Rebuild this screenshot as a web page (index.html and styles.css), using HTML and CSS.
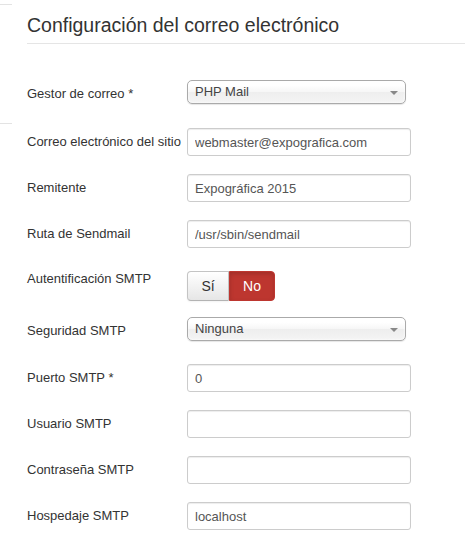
FILE: index.html
```html
<!DOCTYPE html>
<html lang="es">
<head>
<meta charset="UTF-8" />
<meta name="viewport" content="width=device-width, initial-scale=1" />
<title>Configuración del correo electrónico</title>
<link rel="stylesheet" href="styles.css">
</head>
<body>

<div class="layout">
  <div class="sidebar">
    <div class="rule rule-top"></div>
    <div class="rule rule-mid"></div>
  </div>

  <fieldset class="mail-config">
    <legend>Configuración del correo electrónico</legend>

    <div class="row row-select">
      <label>Gestor de correo *</label>
      <div class="chosen">
        <span>PHP Mail</span>
        <b class="arrow"></b>
      </div>
    </div>

    <div class="row">
      <label for="mailfrom">Correo electrónico del sitio</label>
      <input type="text" id="mailfrom" value="webmaster@expografica.com" />
    </div>

    <div class="row">
      <label for="fromname">Remitente</label>
      <input type="text" id="fromname" value="Expográfica 2015" />
    </div>

    <div class="row">
      <label for="sendmail">Ruta de Sendmail</label>
      <input type="text" id="sendmail" value="/usr/sbin/sendmail" />
    </div>

    <div class="row row-radio">
      <label>Autentificación SMTP</label>
      <div class="btn-group">
        <button class="btn">Sí</button>
        <button class="btn btn-danger">No</button>
      </div>
    </div>

    <div class="row row-select row-select-short">
      <label>Seguridad SMTP</label>
      <div class="chosen">
        <span>Ninguna</span>
        <b class="arrow"></b>
      </div>
    </div>

    <div class="row">
      <label for="smtpport">Puerto SMTP *</label>
      <input type="text" id="smtpport" value="0" />
    </div>

    <div class="row">
      <label for="smtpuser">Usuario SMTP</label>
      <input type="text" id="smtpuser" value="" />
    </div>

    <div class="row">
      <label for="smtppass">Contraseña SMTP</label>
      <input type="password" id="smtppass" value="" />
    </div>

    <div class="row">
      <label for="smtphost">Hospedaje SMTP</label>
      <input type="text" id="smtphost" value="localhost" />
    </div>
  </fieldset>
</div>

</body>
</html>
```

FILE: styles.css
```css
body { margin: 0; font-family: "Liberation Sans", Arial, sans-serif; font-size: 13px; line-height: 18px; color: #333; background: #fff; }
.layout { display: flex; }
.sidebar { width: 12px; flex-shrink: 0; }
.rule { height: 1px; background: #e3e3e3; }
.rule-top { margin-top: 4px; }
.rule-mid { margin-top: 118px; }

.mail-config { flex: 1; margin: 0; padding: 0 0 0 15px; border: 0; min-width: 0; }
.mail-config legend {
  display: block;
  width: 100%;
  padding: 8px 0 0;
  margin: 0 0 36px;
  font-size: 19.5px;
  line-height: 35px;
  color: #333;
  border-bottom: 1px solid #e5e5e5;
  box-sizing: border-box;
}

.row { display: flex; align-items: flex-start; margin-bottom: 18px; }
.row label { width: 160px; padding-top: 5px; line-height: 18px; color: #333; }
.row-select { min-height: 30px; }
.row-select-short { min-height: 29px; }
.row-radio { padding-top: 5px; margin-bottom: 16px; }
.row-radio label { margin-top: -5px; padding-top: 4px; }

input[type="text"], input[type="password"] {
  width: 224px;
  height: 28px;
  box-sizing: border-box;
  padding: 4px 7px;
  font: 13px/18px "Liberation Sans", Arial, sans-serif;
  color: #555;
  border: 1px solid #ccc;
  border-radius: 3px;
  box-shadow: inset 0 1px 1px rgba(0,0,0,0.075);
  background: #fff;
}

.chosen {
  position: relative;
  width: 219px;
  height: 24px;
  box-sizing: border-box;
  padding-left: 7px;
  line-height: 22px;
  color: #444;
  border: 1px solid #aaa;
  border-radius: 5px;
  background: linear-gradient(#fff 20%, #f6f6f6 50%, #eee 52%, #f4f4f4 100%);
  box-shadow: inset 0 0 3px #fff, 0 1px 1px rgba(0,0,0,0.1);
}
.chosen .arrow {
  position: absolute;
  right: 7px;
  top: 10px;
  width: 0;
  height: 0;
  border-left: 4px solid transparent;
  border-right: 4px solid transparent;
  border-top: 4px solid #888;
}

.btn-group { display: flex; }
.btn {
  height: 30px;
  padding: 4px 13px;
  font: 14px/20px "Liberation Sans", Arial, sans-serif;
  color: #333;
  border: 1px solid #c4c4c4;
  border-bottom-color: #b3b3b3;
  background: linear-gradient(#fff, #e6e6e6);
  box-shadow: inset 0 1px 0 rgba(255,255,255,0.2), 0 1px 2px rgba(0,0,0,0.05);
  cursor: pointer;
}
.btn:first-child { border-radius: 4px 0 0 4px; width: 42px; }
.btn-danger {
  width: 46px;
  color: #fff;
  border-color: #bd362f;
  background: #bd362f;
  border-radius: 0 4px 4px 0;
  box-shadow: inset 0 2px 4px rgba(0,0,0,0.15);
}
```
